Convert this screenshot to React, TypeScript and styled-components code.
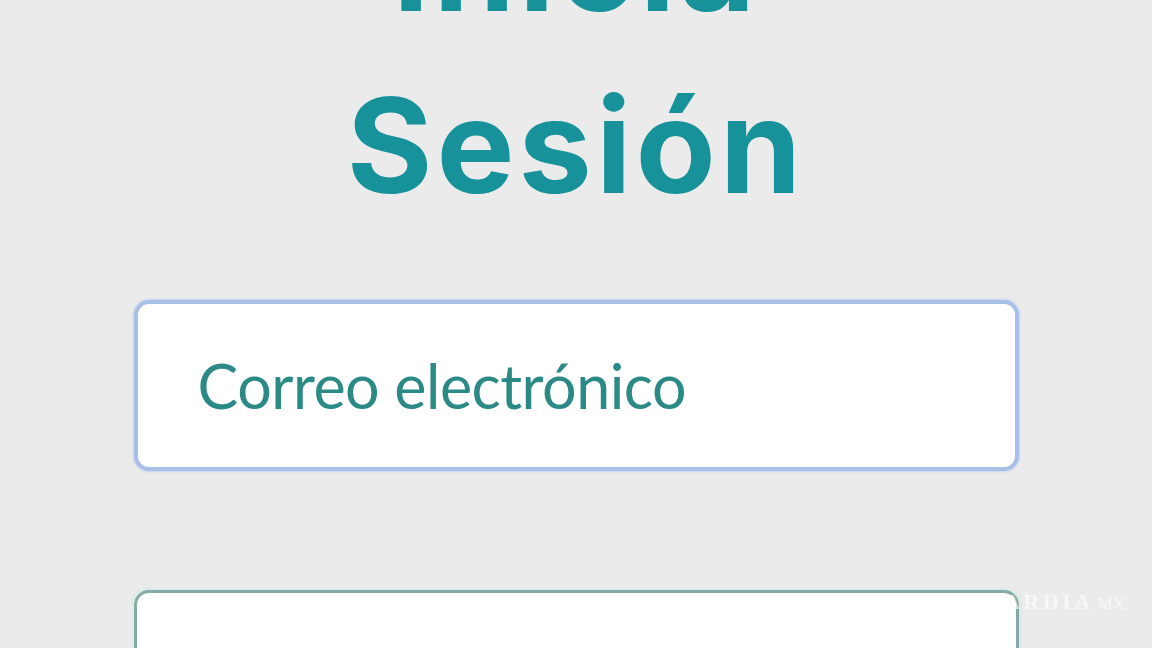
import React from 'react'
import styled, { createGlobalStyle } from 'styled-components'

const GlobalStyle = createGlobalStyle`
  html, body {
    margin: 0;
    padding: 0;
    background: #ebebeb;
    overflow: hidden;
  }
  * { box-sizing: border-box; }
`;

const Screen = styled.div`
  position: relative;
  width: 1152px;
  height: 648px;
  overflow: hidden;
  background: #ebebeb;
  display: flex;
  flex-direction: column;
  align-items: center;
`;

const Title = styled.h1`
  margin: -127px 0 0;
  font-family: Inter, "Open Sans", sans-serif;
  font-weight: 700;
  font-size: 131px;
  line-height: 182px;
  letter-spacing: 4px;
  color: #17929a;
  text-align: center;
`;

const Form = styled.form`
  display: flex;
  flex-direction: column;
  gap: 119px;
  margin-top: 63px;
  width: 885px;
`;

const Field = styled.input<{ $focused?: boolean }>`
  display: block;
  width: 100%;
  height: 171px;
  padding: 0 0 0 60px;
  border: ${p => (p.$focused ? '4px solid #a9bfe8' : '3px solid #86aba7')};
  border-radius: 15px;
  background: #ffffff;
  box-shadow: ${p => (p.$focused ? '0 0 2px 1px #c5d4ef' : '0 0 3px 2px #d6ebe7')};
  font-family: Lato, "Open Sans", sans-serif;
  font-size: 61px;
  letter-spacing: -0.5px;
  color: #2b8a86;
  outline: none;

  &::placeholder {
    color: #2b8a86;
    opacity: 1;
  }
`;

const Watermark = styled.div`
  position: absolute;
  right: 27px;
  top: 591px;
  font-family: "Liberation Serif", serif;
  font-weight: 700;
  font-size: 22px;
  line-height: 1;
  letter-spacing: 3.5px;
  color: rgba(255, 255, 255, 0.65);
  pointer-events: none;

  small {
    font-size: 17px;
    margin-left: 4px;
    letter-spacing: 0;
    font-weight: 400;
  }
`;

export default function App() {
  return (
    <>
      <GlobalStyle />
      <Screen>
        <Title>
          Inicia
          <br />
          Sesión
        </Title>
        <Form>
          <Field $focused type="email" placeholder="Correo electrónico" />
          <Field type="password" placeholder="Contraseña" />
        </Form>
        <Watermark>
          VANGUARDIA<small>MX</small>
        </Watermark>
      </Screen>
    </>
  )
}
